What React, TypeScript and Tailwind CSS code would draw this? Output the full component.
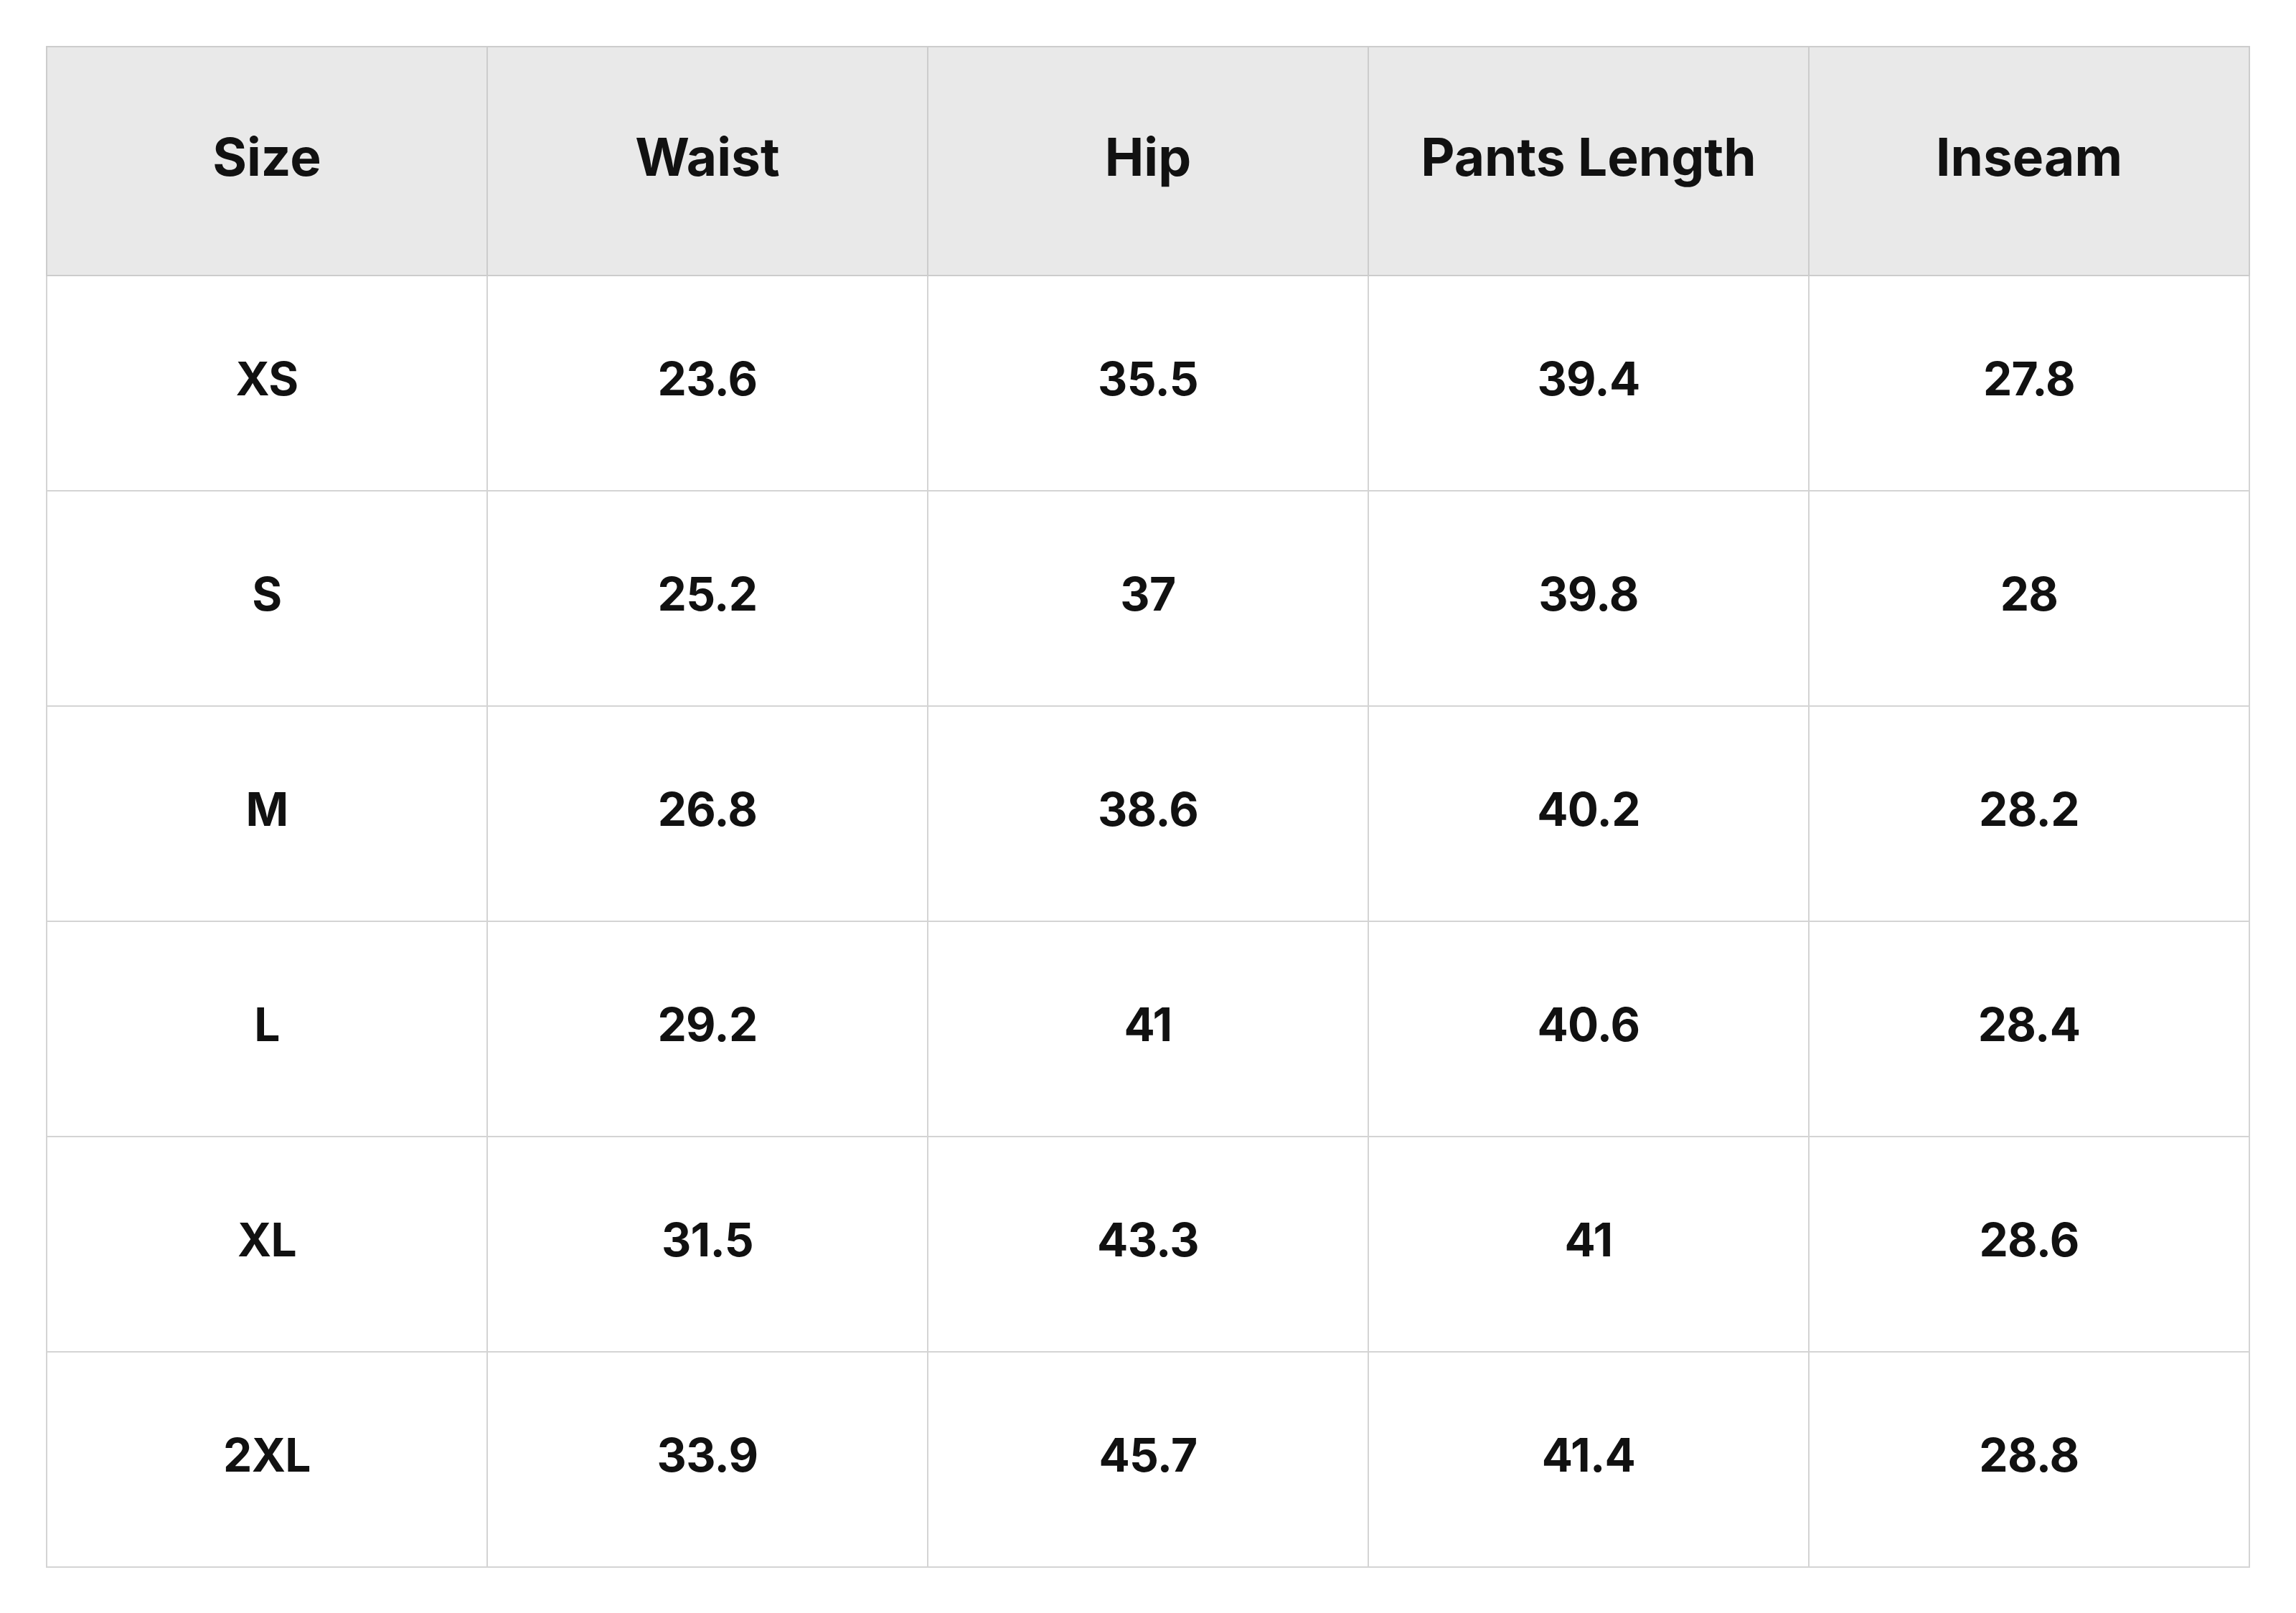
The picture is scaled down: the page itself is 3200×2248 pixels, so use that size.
const headers = ["Size", "Waist", "Hip", "Pants Length", "Inseam"];

const rows = [
  ["XS", "23.6", "35.5", "39.4", "27.8"],
  ["S", "25.2", "37", "39.8", "28"],
  ["M", "26.8", "38.6", "40.2", "28.2"],
  ["L", "29.2", "41", "40.6", "28.4"],
  ["XL", "31.5", "43.3", "41", "28.6"],
  ["2XL", "33.9", "45.7", "41.4", "28.8"],
];

export default function App() {
  return (
    <div className="bg-white p-16 font-['Inter',sans-serif] text-[#111111]">
      <table className="w-full table-fixed border-collapse border-2 border-[#cccccc]">
        <thead>
          <tr className="bg-[#e9e9e9]">
            {headers.map((h) => (
              <th key={h} className="h-[319px] border-2 border-[#cccccc] pb-[12px] text-center text-[73px] font-bold">
                {h}
              </th>
            ))}
          </tr>
        </thead>
        <tbody>
          {rows.map((r) => (
            <tr key={r[0]}>
              {r.map((c, i) => (
                <td key={i} className="h-[300px] border-2 border-[#d4d4d4] pb-[12px] text-center text-[64px] font-bold tracking-[-0.01em]">
                  {c}
                </td>
              ))}
            </tr>
          ))}
        </tbody>
      </table>
    </div>
  );
}
